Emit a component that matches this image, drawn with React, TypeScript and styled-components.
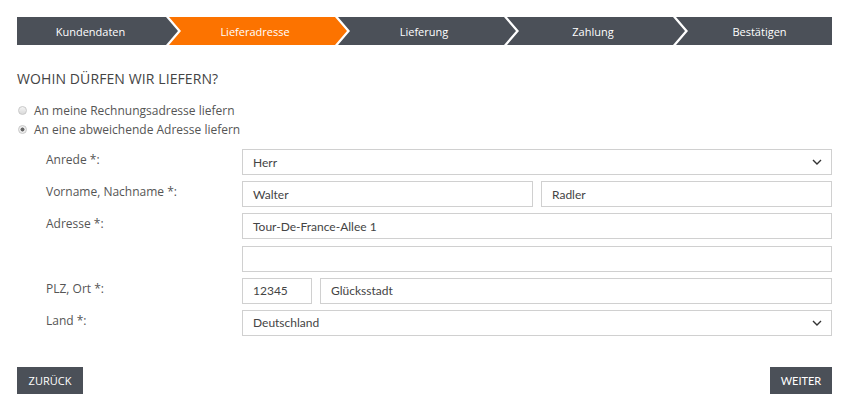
import React from "react";
import styled, { createGlobalStyle, css } from "styled-components";

const Global = createGlobalStyle`
  html, body { margin: 0; padding: 0; background: #fff; }
  body { font-family: "Open Sans", "Liberation Sans", sans-serif; color: #555; }
  * { box-sizing: border-box; }
`;

const Page = styled.div`
  padding: 17px 18px 0 17px;
  width: 850px;
`;

const Steps = styled.div`
  display: flex;
  height: 28px;
`;

const Step = styled.div<{ $active?: boolean; $pos: "first" | "mid" | "last" }>`
  flex: ${(p) => (p.$pos === "last" ? "1 1 auto" : p.$pos === "first" ? "0 0 161px" : "0 0 178px")};
  display: flex;
  align-items: center;
  justify-content: center;
  font-size: 11px;
  color: #fff;
  background: ${(p) => (p.$active ? "#fc7300" : "#4b5058")};
  margin-left: ${(p) => (p.$pos === "first" ? "0" : "-9px")};
  padding-left: ${(p) => (p.$pos === "first" ? "0" : p.$pos === "last" ? "11px" : "4px")};
  padding-right: ${(p) => (p.$pos === "last" ? "0" : p.$pos === "first" ? "14px" : "10px")};
  ${(p) =>
    p.$pos === "first"
      ? css`clip-path: polygon(0 0, calc(100% - 12px) 0, 100% 50%, calc(100% - 12px) 100%, 0 100%);`
      : p.$pos === "last"
      ? css`clip-path: polygon(0 0, 100% 0, 100% 100%, 0 100%, 12px 50%);`
      : css`clip-path: polygon(0 0, calc(100% - 12px) 0, 100% 50%, calc(100% - 12px) 100%, 0 100%, 12px 50%);`}
`;

const Heading = styled.h2`
  margin: 24px 0 0 0;
  font-size: 14px;
  font-weight: 400;
  color: #444;
  line-height: 20px;
  letter-spacing: 0.1px;
`;

const RadioGroup = styled.div`
  margin-top: 12px;
  display: flex;
  flex-direction: column;
  gap: 1px;
`;

const RadioRow = styled.label`
  display: flex;
  align-items: center;
  gap: 7px;
  font-size: 12px;
  color: #555;
  height: 18px;
  padding-left: 1px;
`;

const RadioDot = styled.span<{ $checked?: boolean }>`
  width: 9px;
  height: 9px;
  border-radius: 50%;
  border: 1px solid #c8c8c8;
  background: ${(p) =>
    p.$checked
      ? "radial-gradient(circle, #666 0 1.7px, #eee 2.3px)"
      : "linear-gradient(#f4f4f4, #dadada)"};
  flex: none;
`;

const Form = styled.div`
  margin-top: 11px;
  display: grid;
  grid-template-columns: 196px 1fr;
  padding-left: 29px;
  row-gap: 6.2px;
`;

const Label = styled.div`
  font-size: 12px;
  color: #555;
  line-height: 16px;
  padding-top: 3px;
`;

const Field = styled.div<{ $split?: string }>`
  display: grid;
  grid-template-columns: ${(p) => p.$split || "1fr"};
  gap: 8px;
`;

const Input = styled.div<{ $select?: boolean }>`
  height: 26px;
  border: 1px solid #d0d0d0;
  display: flex;
  align-items: center;
  justify-content: space-between;
  padding: 0 9px 0 10px;
  font-family: Lato, "Liberation Sans", sans-serif;
  font-size: 12px;
  color: #444;
  background: #fff;
`;

const Chevron = () => (
  <svg width="10" height="6" viewBox="0 0 10 6" fill="none">
    <path d="M1 1l4 4 4-4" stroke="#333" strokeWidth="1.4" />
  </svg>
);

const Actions = styled.div`
  margin-top: 31px;
  display: flex;
  justify-content: space-between;
`;

const Button = styled.button<{ $lato?: boolean }>`
  height: 27px;
  border: none;
  background: #4b5058;
  color: #fff;
  font-size: 11px;
  text-transform: uppercase;
  font-family: ${(p) => (p.$lato ? "Lato" : '"Open Sans"')}, "Liberation Sans", sans-serif;
  padding: 0;
  width: ${(p) => (p.$lato ? "62px" : "66px")};
`;

const steps = ["Kundendaten", "Lieferadresse", "Lieferung", "Zahlung", "Bestätigen"];

export default function App() {
  return (
    <>
      <Global />
      <Page>
        <Steps>
          {steps.map((s, i) => (
            <Step
              key={s}
              $active={i === 1}
              $pos={i === 0 ? "first" : i === steps.length - 1 ? "last" : "mid"}
            >
              {s}
            </Step>
          ))}
        </Steps>
        <Heading>WOHIN DÜRFEN WIR LIEFERN?</Heading>
        <RadioGroup>
          <RadioRow>
            <RadioDot />
            An meine Rechnungsadresse liefern
          </RadioRow>
          <RadioRow>
            <RadioDot $checked />
            An eine abweichende Adresse liefern
          </RadioRow>
        </RadioGroup>
        <Form>
          <Label>Anrede *:</Label>
          <Field>
            <Input $select>
              Herr
              <Chevron />
            </Input>
          </Field>
          <Label>Vorname, Nachname *:</Label>
          <Field $split="1fr 1fr">
            <Input>Walter</Input>
            <Input>Radler</Input>
          </Field>
          <Label>Adresse *:</Label>
          <Field>
            <Input>Tour-De-France-Allee 1</Input>
          </Field>
          <Label />
          <Field>
            <Input />
          </Field>
          <Label>PLZ, Ort *:</Label>
          <Field $split="70px 1fr">
            <Input>12345</Input>
            <Input>Glücksstadt</Input>
          </Field>
          <Label>Land *:</Label>
          <Field>
            <Input $select>
              Deutschland
              <Chevron />
            </Input>
          </Field>
        </Form>
        <Actions>
          <Button>Zurück</Button>
          <Button $lato>Weiter</Button>
        </Actions>
      </Page>
    </>
  );
}
